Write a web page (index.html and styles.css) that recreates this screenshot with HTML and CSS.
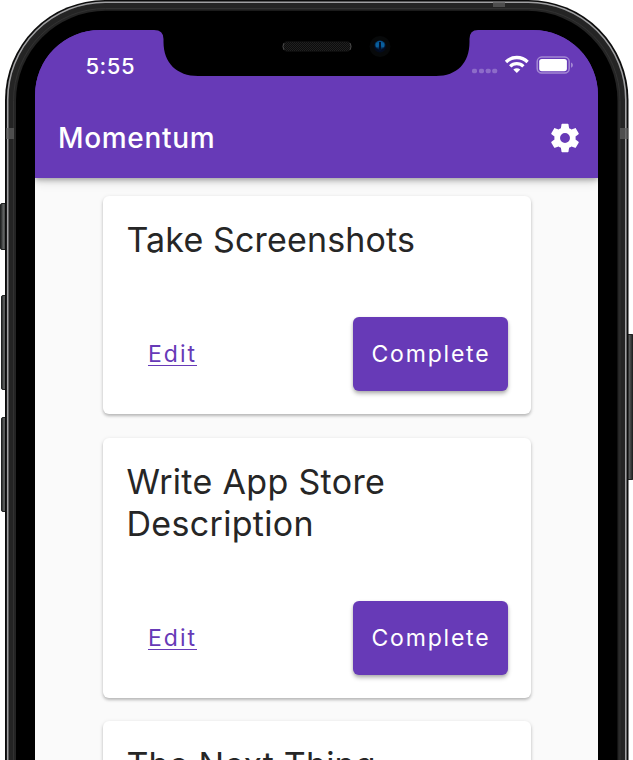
FILE: index.html
```html
<!DOCTYPE html>
<html lang="en">
<head>
<meta charset="utf-8">
<title>Momentum</title>
<link rel="stylesheet" href="styles.css">
</head>
<body>
<div class="stage">
  <svg class="frame" viewBox="0 0 633 760" aria-hidden="true">
    <defs>
      <linearGradient id="key" x1="0" x2="1" y1="0" y2="0">
        <stop offset="0" stop-color="#181a1a"/><stop offset=".35" stop-color="#626464"/><stop offset=".6" stop-color="#404242"/><stop offset="1" stop-color="#111"/>
      </linearGradient>
    </defs>
    <g fill="url(#key)" stroke="#202222">
      <rect x=".5" y="203.5" width="8" height="46" rx="1.5"/>
      <rect x="1.5" y="295.5" width="7" height="94" rx="1.5"/>
      <rect x="1.5" y="417.5" width="7" height="94" rx="1.5"/>
      <rect x="626.5" y="334.5" width="7" height="145" rx="1.5"/>
    </g>
    <rect x="5" y="0" width="623.5" height="1100" rx="100" fill="#0c0c0c"/>
    <rect x="7.7" y="2.2" width="618.1" height="1100" rx="97.5" fill="#242424" stroke="#a0a0a2" stroke-width="1.6"/>
    <rect x="13.5" y="8.5" width="606.5" height="1100" rx="92" fill="none" stroke="#323232"/>
    <rect x="16" y="10.8" width="601.5" height="1100" rx="90" fill="#000"/>
    <path d="M6 128h8v11H6zM620 128h8v11h-8zM493 1h12v6h-12z" fill="#5c5c5c" opacity=".75"/>
  </svg>
  <main class="screen">
    <header class="top">
      <div class="status">
        <span class="time">5:55</span>
        <svg class="signals" viewBox="0 0 104 22" aria-hidden="true">
          <g fill="#fff" opacity=".25"><rect x="2" y="14.7" width="5" height="4.5" rx="1.6"/><rect x="9" y="14.7" width="5" height="4.5" rx="1.6"/><rect x="15.7" y="14.7" width="5" height="4.5" rx="1.6"/><rect x="22.2" y="14.7" width="5" height="4.5" rx="1.6"/></g>
          <g fill="none" stroke="#fff" stroke-width="3.3"><path d="M36 8a15.200 15.200 0 0 1 21.600 0"/><path d="M40.200 12.300a9.300 9.300 0 0 1 13.200 0"/></g>
          <path d="M43.300 15.600q3.500-2.600 7 0l-3.500 3.500z" fill="#fff"/>
          <rect x="67.200" y="3.100" width="32" height="16" rx="4.500" fill="none" stroke="#fff" stroke-opacity=".4" stroke-width="1.500"/>
          <rect x="69.200" y="5" width="27.700" height="12.200" rx="2.600" fill="#fff"/>
          <path d="M101 8.600c2.500.7 2.500 4.500 0 5.200z" fill="#fff" opacity=".4"/>
        </svg>
      </div>
      <div class="appbar">
        <h1>Momentum</h1>
        <svg class="gear" viewBox="0 0 24 24" role="img" aria-label="Settings"><path fill="#fff" d="M19.430 12.980c.04-.32.07-.64.07-.98s-.03-.66-.07-.98l2.110-1.650c.19-.15.240-.42.120-.64l-2-3.460c-.12-.22-.39-.3-.61-.22l-2.490 1c-.52-.4-1.080-.73-1.690-.98l-.38-2.650C14.460 2.180 14.250 2 14 2h-4c-.25 0-.46.18-.49.42l-.38 2.650c-.61.25-1.170.59-1.690.98l-2.490-1c-.23-.09-.49 0-.61.22l-2 3.460c-.13.22-.07.49.12.64l2.110 1.650c-.04.32-.07.65-.07.98s.03.66.07.98l-2.110 1.650c-.19.15-.24.42-.12.64l2 3.460c.12.22.39.3.61.22l2.490-1c.52.4 1.080.73 1.690.98l.38 2.650c.03.24.24.42.49.42h4c.25 0 .46-.18.49-.42l.38-2.650c.61-.25 1.170-.59 1.690-.98l2.490 1c.23.09.49 0 .61-.22l2-3.460c.12-.22.07-.49-.12-.64zM12 15.500a3.500 3.500 0 1 1 0-7 3.500 3.500 0 0 1 0 7z"/></svg>
      </div>
    </header>
    <section class="tasks">
      <article class="card">
        <h2>Take Screenshots</h2>
        <div class="actions"><a>Edit</a><button>Complete</button></div>
      </article>
      <article class="card">
        <h2 class="long">Write App Store Description</h2>
        <div class="actions"><a>Edit</a><button>Complete</button></div>
      </article>
      <article class="card">
        <h2>The Next Thing</h2>
      </article>
    </section>
  </main>
  <svg class="notch" viewBox="0 0 330 60" aria-hidden="true">
    <defs>
      <pattern id="mesh" width="2" height="2" patternUnits="userSpaceOnUse"><rect width="2" height="2" fill="#0c0c0c"/><path d="M0 0h1v1H0zM1 1h1v1H1z" fill="#202020"/></pattern>
      <radialGradient id="lens" cy=".3"><stop offset="0" stop-color="#0876b8"/><stop offset=".5" stop-color="#064f8c"/><stop offset="1" stop-color="#020b20"/></radialGradient>
    </defs>
    <path d="M4 0V10Q13.500 10 13.500 19V22C13.500 43 27 56 48 56H286C307 56 319.500 43 319.500 22V19Q319.500 10 328 10V0z"/>
    <rect x="132.500" y="21.500" width="69" height="10" rx="5" fill="url(#mesh)" stroke="#0c0c0c"/>
    <path d="M134 23q-2 3.500 0 7M200 23q2 3.500 0 7" fill="none" stroke="#555" stroke-width=".8"/>
    <circle cx="230" cy="26.500" r="10.500" fill="#07090a"/>
    <circle cx="230" cy="26.500" r="6" fill="url(#lens)"/>
    <path d="M230 22v9" stroke="#02102a" stroke-width="2"/>
    <ellipse cx="227" cy="25" rx="1.500" ry="2.500" fill="#0a5f9c"/><ellipse cx="233" cy="25" rx="1.500" ry="2.500" fill="#0a5f9c"/>
  </svg>
</div>
</body>
</html>
```
FILE: styles.css
```css
* { box-sizing: border-box; }
body { margin: 0; background: #fff; font-family: Inter, "Liberation Sans", sans-serif; }
.stage { position: relative; width: 633px; height: 760px; overflow: hidden; padding: 30px 34.600px 0 35.400px; }
.frame { position: absolute; inset: 0; width: 633px; height: 760px; }
.screen { position: relative; width: 563px; height: 730px; overflow: hidden; background: linear-gradient(#673ab7 140px, #fafafa 140px); border-radius: 65px 65px 0 0; }
.top { position: relative; height: 148px; background: #673ab7; color: #fff; box-shadow: 0 2px 5px rgba(0,0,0,.28), 0 4px 10px rgba(0,0,0,.12); }
.status { height: 68px; padding: 24px 24.200px 0 50px; display: flex; justify-content: space-between; }
.time { font-size: 22px; font-weight: 500; line-height: 24px; letter-spacing: .6px; }
.signals { width: 104px; height: 22px; }
.appbar { height: 80px; padding: 0 16.700px 0 22.600px; display: flex; align-items: center; justify-content: space-between; }
h1 { margin: 0; font-size: 28px; font-weight: 500; line-height: 34px; letter-spacing: .68px; }
.gear { width: 34px; height: 34px; }
.tasks { width: 428px; margin: 18px 0 0 67.600px; display: flex; flex-direction: column; gap: 23.500px; }
.card { padding: 23px 23px 23px 24px; background: #fff; border-radius: 6px; box-shadow: 0 2px 3px rgba(0,0,0,.22), 0 1px 5px rgba(0,0,0,.09); }
h2 { margin: 0 0 0 -.5px; font-size: 34px; font-weight: 400; line-height: 42px; letter-spacing: .15px; color: #262626; }
.long { letter-spacing: .32px; }
.actions { margin-top: 56px; padding-left: 21px; display: flex; align-items: center; justify-content: space-between; }
a { color: #673ab7; font-size: 23px; line-height: 28px; letter-spacing: 2px; text-decoration: underline; text-decoration-thickness: 1.300px; text-underline-offset: 3px; }
button { width: 155px; height: 74px; padding: 0 0 0 1px; border: 0; border-radius: 6px; background: #673ab7; color: #fff; font: 400 23px/28px Inter, sans-serif; letter-spacing: 1.800px; box-shadow: 0 3px 4px rgba(0,0,0,.25), 0 1px 3px rgba(0,0,0,.12); }
.notch { position: absolute; left: 150px; top: 20px; width: 330px; height: 60px; }
```
